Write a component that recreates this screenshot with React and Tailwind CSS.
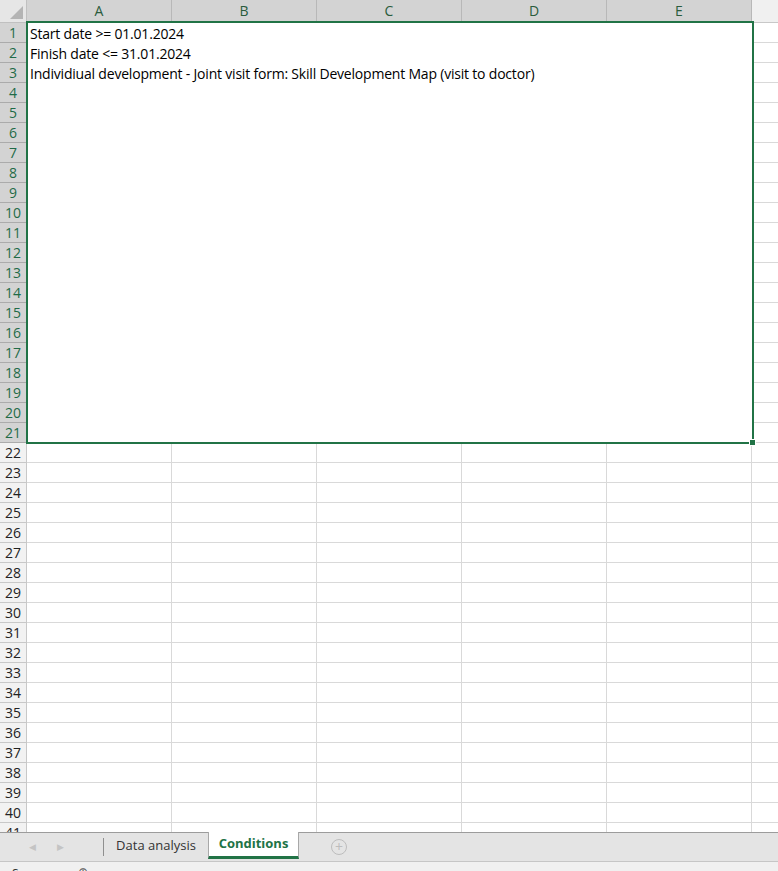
import React from "react";

const cols = ["A", "B", "C", "D", "E"];
const texts = {
  1: "Start date >= 01.01.2024",
  2: "Finish date <= 31.01.2024",
  3: "Individiual development - Joint visit form: Skill Development Map (visit to doctor)",
};

function Row({ n }) {
  const sel = n <= 21;
  return (
    <div className="flex h-[20px]">
      <div
        className={
          "w-[27px] shrink-0 flex items-center justify-center border-r border-b text-[14px] leading-none " +
          (sel
            ? "bg-[#d3d3d3] border-[#ababab] text-[#1f6b47]"
            : "bg-[#f2f2f2] border-[#c8c8c8] text-[#222]")
        }
      >
        {n}
      </div>
      <div className="relative flex flex-1">
        {cols.map((c) => (
          <div
            key={c}
            className={
              "w-[145px] shrink-0 border-b border-r " +
              (sel ? "bg-white border-transparent" : "border-[#d9d9d9]")
            }
          />
        ))}
        <div className="flex-1 border-b border-[#d9d9d9]" />
        {texts[n] && (
          <div className="absolute left-[3px] top-0 h-[20px] flex items-center whitespace-nowrap text-[14px] text-black font-['Open_Sans',sans-serif] tracking-[-0.2px]">
            {texts[n]}
          </div>
        )}
      </div>
    </div>
  );
}

export default function App() {
  const rows = Array.from({ length: 41 }, (_, i) => i + 1);
  return (
    <div className="w-[778px] h-[871px] overflow-hidden bg-white font-['Open_Sans',sans-serif] flex flex-col">
      <div className="relative h-[832px] overflow-hidden shrink-0">
        {/* column header */}
        <div className="flex h-[23px]">
          <div className="w-[27px] shrink-0 bg-[#e6e6e6] border-r border-b border-[#c0c0c0] relative">
            <div className="absolute right-[3px] bottom-[3px] w-0 h-0 border-l-[13px] border-l-transparent border-b-[13px] border-b-[#b4b4b4]" />
          </div>
          {cols.map((c) => (
            <div
              key={c}
              className="w-[145px] shrink-0 bg-[#d3d3d3] border-r border-[#b8b8b8] flex items-center justify-center text-[14px] text-[#2a5c3c] border-b-2 border-b-[#217346]"
            >
              {c}
            </div>
          ))}
          <div className="flex-1 bg-[#f0f0f0] border-b border-[#c8c8c8]" />
        </div>
        {rows.map((n) => (
          <Row key={n} n={n} />
        ))}
        {/* selection */}
        <div className="absolute left-[26px] top-[21px] w-[728px] h-[423px] border-2 border-[#217346] pointer-events-none" />
        <div className="absolute left-[749px] top-[439px] w-[7px] h-[7px] bg-[#217346] border border-white" />
      </div>
      {/* tab bar */}
      <div className="h-[29px] shrink-0 bg-[#e4e4e4] border-t border-[#9c9c9c] flex items-stretch relative">
        <div className="w-[103px] flex items-center text-[9px] text-[#c4c4c4]">
          <span className="ml-[29px]">◀</span>
          <span className="ml-[21px]">▶</span>
        </div>
        <div className="w-px bg-[#8f8f8f] my-[5px]" />
        <div className="w-[104px] flex items-center justify-center text-[13px] text-[#333] pb-[2px]">
          Data analysis
        </div>
        <div className="w-[91px] bg-white border-x border-[#a8a8a8] -mt-px mb-[2px] flex items-center justify-center text-[13px] font-bold text-[#217346] border-b-[3px] border-b-[#217346]">
          Conditions
        </div>
        <div className="ml-[32px] flex items-center">
          <div className="w-[16px] h-[16px] rounded-full border border-[#bdbdbd] flex items-center justify-center text-[#bdbdbd] text-[14px] leading-none">
            +
          </div>
        </div>
      </div>
      <div className="flex-1 bg-[#f0f0f0] border-t border-[#c6c6c6] relative overflow-hidden">
        <span className="absolute left-[12px] top-[3px] text-[12px] text-[#333]">S</span>
        <span className="absolute left-[78px] top-[1px] text-[12px] text-[#555]">⊕</span>
      </div>
    </div>
  );
}
